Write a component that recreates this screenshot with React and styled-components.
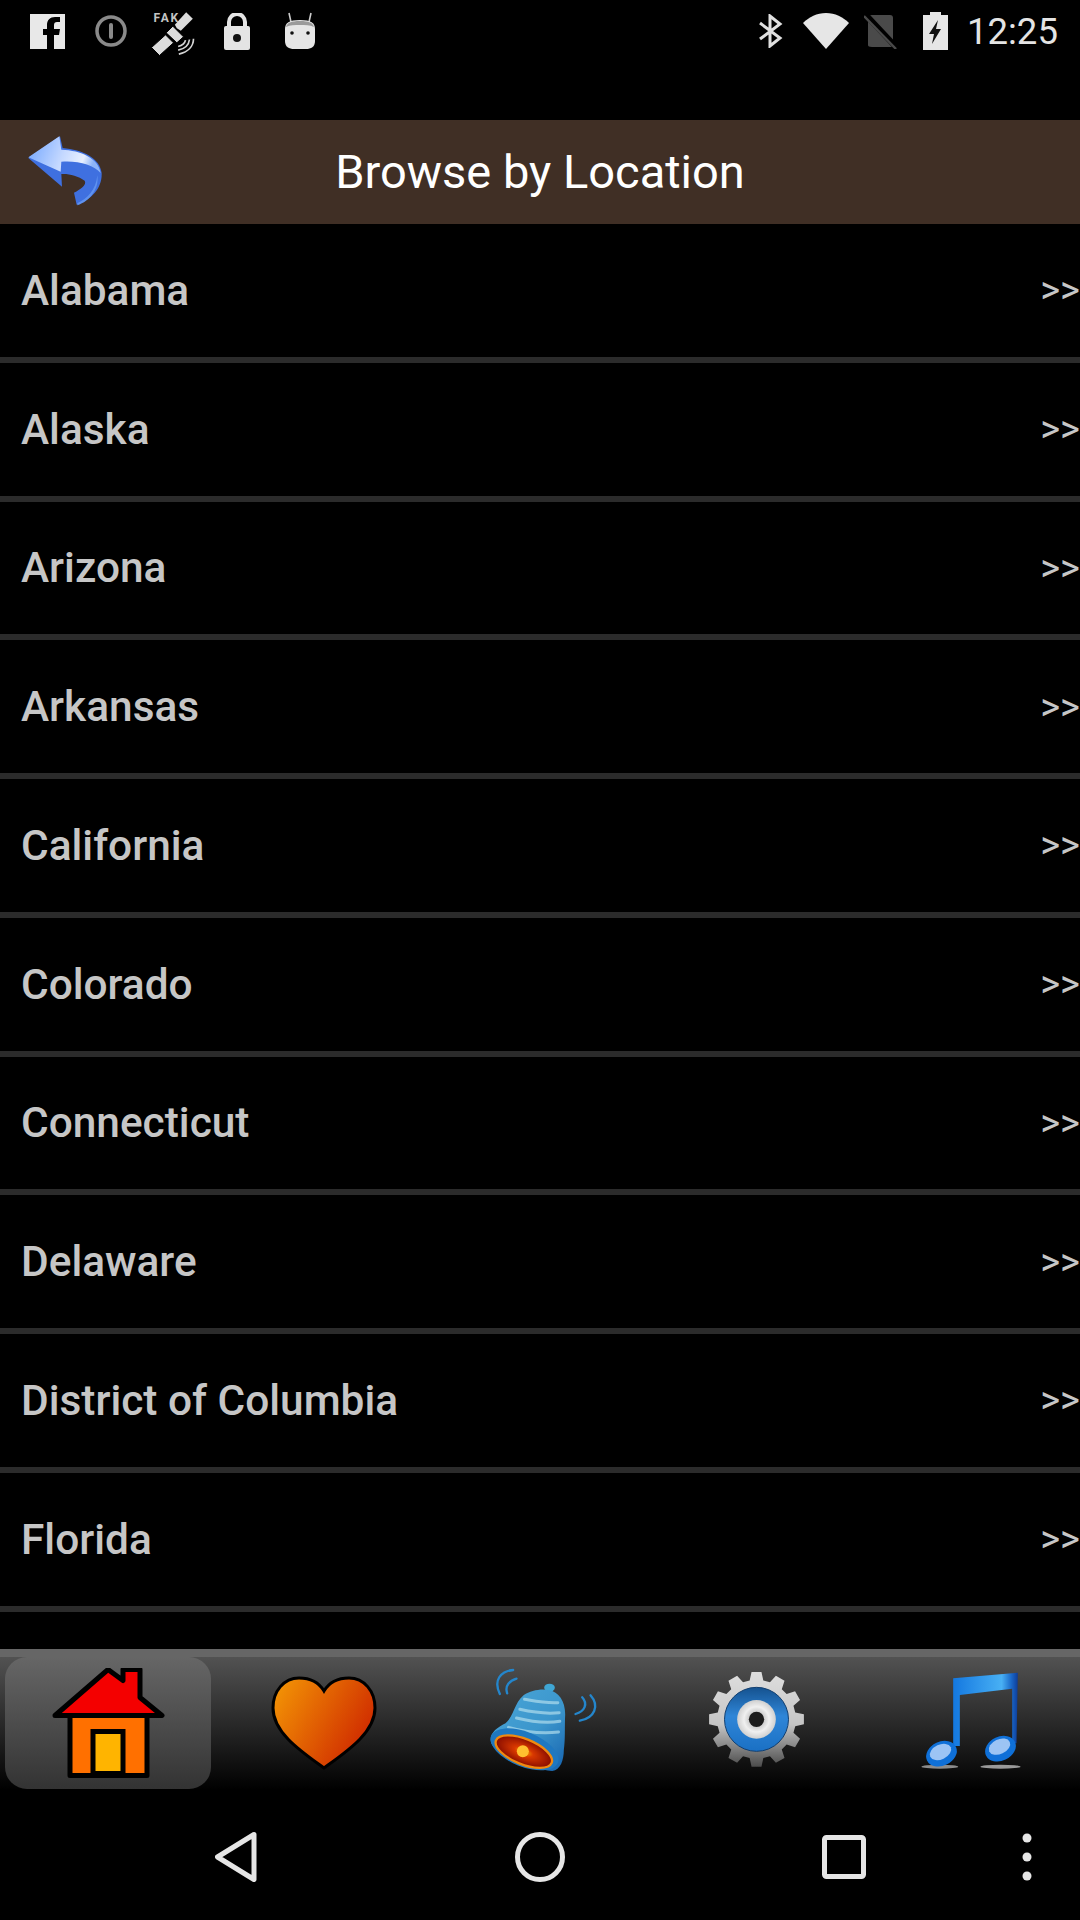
import styled, { createGlobalStyle } from "styled-components";

const GlobalStyle = createGlobalStyle`
  html, body {
    margin: 0;
    padding: 0;
    background: #000;
  }
`;

const Screen = styled.div`
  width: 1080px;
  height: 1920px;
  display: flex;
  flex-direction: column;
  background: #000;
  font-family: Roboto, "Liberation Sans", sans-serif;
  overflow: hidden;
`;

const StatusBar = styled.div`
  height: 120px;
  flex: none;
  display: flex;
  justify-content: space-between;
  align-items: flex-start;
  padding-left: 16px;
  box-sizing: border-box;
`;

const StatusGroup = styled.div`
  display: flex;
  align-items: center;
  height: 62px;
`;

const StatusSlot = styled.div`
  width: ${(p) => p.$width}px;
  display: flex;
  justify-content: center;
  align-items: center;
`;

const Clock = styled.span`
  font-size: 36.5px;
  color: #e4e4e4;
  width: 117px;
  padding-left: 4px;
  box-sizing: border-box;
`;

const Header = styled.div`
  position: relative;
  height: 104px;
  flex: none;
  display: flex;
  align-items: center;
  justify-content: center;
  background: #402f25;
`;

const Title = styled.h1`
  margin: 0 0 2px;
  font-size: 47px;
  font-weight: 400;
  color: #fff;
`;

const BackButton = styled.div`
  position: absolute;
  left: 20px;
  top: 8px;
  width: 90px;
  height: 84px;
  svg {
    filter: blur(0.6px);
  }
`;

const List = styled.div`
  flex: 1;
  min-height: 0;
  overflow: hidden;
`;

const Row = styled.div`
  height: 138.75px;
  box-sizing: border-box;
  display: flex;
  align-items: center;
  justify-content: space-between;
  padding-left: 21px;
  border-bottom: 6px solid #2b2b2b;
`;

const RowLabel = styled.span`
  font-size: 42.4px;
  font-weight: 500;
  color: #c6c6c6;
`;

const RowArrows = styled.span`
  font-size: 38px;
  color: #c6c6c6;
`;

const TabBar = styled.div`
  height: 141px;
  flex: none;
  display: grid;
  grid-template-columns: repeat(5, 216px);
  box-sizing: border-box;
  border-top: 8px solid #666;
  background: linear-gradient(#525252, #000);
`;

const Tab = styled.div`
  display: flex;
  align-items: center;
  justify-content: center;
  height: 132px;
  margin: 0 5px;
  border-radius: 22px;
  background: ${(p) => (p.$active ? "linear-gradient(#666, #333)" : "transparent")};
  svg {
    filter: blur(0.5px);
  }
`;

const NavBar = styled.div`
  height: 130px;
  flex: none;
  box-sizing: border-box;
  padding: 4px 0 0 84px;
  display: grid;
  grid-template-columns: repeat(3, 304px) 62px;
  align-items: center;
  justify-items: center;
`;

const NavItem = styled.div`
  display: flex;
  align-items: center;
  justify-content: center;
`;

const FacebookIcon = () => (
  <svg width="35" height="35" viewBox="0 0 35 35">
    <path d="M0 0h35v35H24V21h5l1-6h-6v-4c0-2 1-3 3-3h3V3h-5c-5 0-8 3-8 8v4h-4v6h4v14H0z" fill="#e8e8e8" />
  </svg>
);

const InfoIcon = () => (
  <svg width="32" height="32" viewBox="0 0 32 32">
    <circle cx="16" cy="16" r="14" fill="none" stroke="#8a8a8a" strokeWidth="3.5" />
    <rect x="14" y="8" width="4" height="16" rx="2" fill="#8a8a8a" />
  </svg>
);

const SatelliteIcon = () => (
  <svg width="60" height="55" viewBox="-4.5 -4.5 180 165">
    <text x="24" y="50" fontFamily="Roboto, sans-serif" fontSize="36" fontWeight="700" letterSpacing="5" fill="#c4c4c4">FAK</text>
    <g fill="#dcdcdc">
      <path d="M122 20l20 20-36 36-12-8-6-10z" />
      <path d="M62 82l20-20 32 32-20 18z" stroke="#000" strokeWidth="3" />
      <path d="M18 126l42-38 24 24-42 38z" stroke="#000" strokeWidth="3" />
    </g>
    <g fill="none" stroke="#d4d4d4" strokeWidth="5">
      <path d="M144 100c0 24-18 40-44 46" />
      <path d="M132 102c-2 16-14 28-34 32" />
      <path d="M120 104c-2 9-10 16-22 19" />
    </g>
  </svg>
);

const LockIcon = () => (
  <svg width="26" height="37" viewBox="0 0 26 37">
    <path d="M5 14V9a8 8 0 0 1 16 0v5" fill="none" stroke="#e4e4e4" strokeWidth="4" />
    <rect x="0" y="13" width="26" height="24" rx="2" fill="#e4e4e4" />
    <circle cx="13" cy="25" r="4" fill="#111" />
  </svg>
);

const AndroidIcon = () => (
  <svg width="32" height="38" viewBox="0 0 32 38">
    <path d="M7 10L5 1M25 10l2-9" stroke="#ccc" strokeWidth="1.6" />
    <path d="M1 17c0-6 4-9 15-9s15 3 15 9v12c0 6-4 8-9 8H10c-5 0-9-2-9-8z" fill="#e6e6e6" />
    <path d="M2 15c1-4 5-6 14-6s13 2 14 6c-4-2-9-2-14-2s-10 0-14 2z" fill="#9a9a9a" />
    <circle cx="8" cy="21" r="1.8" fill="#111" />
    <circle cx="24" cy="21" r="1.8" fill="#111" />
  </svg>
);

const BluetoothIcon = () => (
  <svg width="24" height="34" viewBox="0 0 24 34">
    <path d="M1 9l20 15-10 8V2l10 8L1 25" fill="none" stroke="#e0e0e0" strokeWidth="3" />
  </svg>
);

const WifiIcon = () => (
  <svg width="46" height="36" viewBox="0 0 46 36">
    <path d="M0 10C6 4 14 0 23 0s17 4 23 10L23 36z" fill="#e6e6e6" />
  </svg>
);

const SimIcon = () => (
  <svg width="34" height="36" viewBox="0 0 34 36">
    <path d="M8 2h18c2 0 3 1 3 3v28c0 1-1 1-3 1H8c-3 0-4-1-4-2V5c0-2 1-3 4-3z" fill="#4a4a4a" />
    <path d="M1 1l32 34" stroke="#000" strokeWidth="6" />
    <path d="M0 3l32 33" stroke="#4a4a4a" strokeWidth="2.4" />
  </svg>
);

const BatteryIcon = () => (
  <svg width="25" height="38" viewBox="0 0 25 38">
    <path d="M7 3V0h11v3h7v35H0V3z" fill="#e6e6e6" />
    <path d="M15 8L6 22h5l-2 10 9-15h-5z" fill="#111" />
  </svg>
);

const ReplyIcon = () => (
  <svg width="90" height="84" viewBox="0 0 270 252">
    <defs>
      <linearGradient id="replyFace" x1="0" y1="0" x2="1" y2="0.2">
        <stop offset="0" stopColor="#6fa4ff" />
        <stop offset="0.55" stopColor="#c4d8ff" />
        <stop offset="0.85" stopColor="#e8f0ff" />
        <stop offset="1" stopColor="#8db4f8" />
      </linearGradient>
    </defs>
    <path d="M25 90L120 25l8 35c60 5 112 30 117 75 2 45-30 80-75 95l-8-36c25-12 38-25 32-36-20-15-50-22-70-20l2 38z" fill="#3f70e0" />
    <path d="M25 88L118 25l6 40c60 2 112 26 118 70-20-25-70-38-118-34l-2 30z" fill="url(#replyFace)" />
    <path d="M172 226c30-14 56-40 60-84 6 40-22 78-60 90z" fill="#5f92ef" />
  </svg>
);

const HomeIcon = () => (
  <svg width="113" height="111" viewBox="0 1.5 113 111">
    <rect x="18" y="48" width="77" height="61" fill="#ff7000" stroke="#000" strokeWidth="5" strokeLinejoin="round" />
    <rect x="41" y="65" width="30" height="42" fill="#ffb400" stroke="#000" strokeWidth="5" />
    <path d="M3 49L56 3l15 11V3h17v28l22 18z" fill="#f40000" stroke="#000" strokeWidth="5" strokeLinejoin="round" />
  </svg>
);

const HeartIcon = () => (
  <svg width="106" height="94" viewBox="0 0 106 94">
    <defs>
      <linearGradient id="heartFill" x1="0" y1="0" x2="1" y2="0.5">
        <stop offset="0" stopColor="#f59a05" />
        <stop offset="1" stopColor="#d02c00" />
      </linearGradient>
    </defs>
    <path d="M53 15C47 5 38 2 28 2 13 2 2 15 2 32c0 25 29 44 51 60 22-16 51-35 51-60C104 15 93 2 78 2 68 2 59 5 53 15z" fill="url(#heartFill)" stroke="#000" strokeWidth="3" />
  </svg>
);

const BellIcon = () => (
  <svg width="125" height="120" viewBox="-7.500 9 375 360">
    <defs>
      <linearGradient id="bellBody" x1="0" y1="0" x2="0.8" y2="1">
        <stop offset="0" stopColor="#4aa6d8" />
        <stop offset="0.6" stopColor="#3c96cc" />
        <stop offset="1" stopColor="#1c6cb4" />
      </linearGradient>
      <radialGradient id="bellMouth" cx="0.5" cy="0.5" r="0.55">
        <stop offset="0" stopColor="#ffaa00" />
        <stop offset="0.3" stopColor="#d83800" />
        <stop offset="1" stopColor="#7c0600" />
      </radialGradient>
    </defs>
    <ellipse cx="207" cy="83" rx="16" ry="12" fill="#3fa6d4" />
    <path d="M205 90C235 95 255 125 254 165 252 205 255 235 250 270 250 300 240 330 215 333 170 330 70 300 35 255 20 225 45 205 75 190 100 170 100 130 130 105 150 92 180 85 205 90z" fill="url(#bellBody)" />
    <g fill="none" stroke="#b8e2f0" strokeWidth="9" strokeLinecap="round" opacity="0.65">
      <path d="M132 118c30 5 62 12 100 10" />
      <path d="M118 148c35 8 80 14 118 10" />
      <path d="M108 174c40 10 90 16 130 10" />
      <path d="M84 202c50 14 100 20 150 14" />
    </g>
    <ellipse cx="132" cy="268" rx="108" ry="52" transform="rotate(22 132 268)" fill="#1f78c0" />
    <ellipse cx="130" cy="275" rx="90" ry="38" transform="rotate(22 130 275)" fill="url(#bellMouth)" stroke="#f08a10" strokeWidth="7" />
    <circle cx="127" cy="274" r="18" fill="#ffc030" />
    <g fill="none" stroke="#2486cc" strokeWidth="7" strokeLinecap="round">
      <path d="M98 30C60 34 38 60 58 102" />
      <path d="M108 56C88 62 72 76 80 100" />
      <path d="M305 112c18 20 8 42-20 50" />
      <path d="M330 106c28 32 12 68-32 76" />
    </g>
  </svg>
);

const CX = 168;
const CY = 178;

// outline of the cog, 12 teeth round the centre
const gearOutline = Array.from({ length: 12 }, (_, i) => {
  const a = (i * 30 * Math.PI) / 180 - Math.PI / 2;
  return [
    [118, -10],
    [143, -6],
    [143, 6],
    [118, 10],
  ]
    .map(([r, d]) => {
      const t = a + (d * Math.PI) / 180;
      return `${(CX + r * Math.cos(t)).toFixed(1)} ${(CY + r * Math.sin(t)).toFixed(1)}`;
    })
    .join(" L");
}).join(" L");

const GearIcon = () => (
  <svg width="125" height="120" viewBox="-19.500 9 375 360">
    <defs>
      <linearGradient id="gearMetal" x1="0" y1="0" x2="0" y2="1">
        <stop offset="0" stopColor="#dedede" />
        <stop offset="0.55" stopColor="#c6c6c6" />
        <stop offset="1" stopColor="#4c4c4c" />
      </linearGradient>
      <linearGradient id="gearRing" x1="0" y1="0" x2="0" y2="1">
        <stop offset="0" stopColor="#15528f" />
        <stop offset="0.45" stopColor="#2f86d8" />
        <stop offset="1" stopColor="#1a70c4" />
      </linearGradient>
      <radialGradient id="gearDisc" cx="0.5" cy="0.5" r="0.5">
        <stop offset="0" stopColor="#999" />
        <stop offset="0.65" stopColor="#f0f0f0" />
        <stop offset="1" stopColor="#cfcfcf" />
      </radialGradient>
    </defs>
    <path d={`M${gearOutline}z`} fill="url(#gearMetal)" />
    <circle cx={CX} cy={CY} r="96" fill="url(#gearRing)" stroke="#123f70" strokeWidth="3" />
    <circle cx={CX} cy={CY} r="58" fill="url(#gearDisc)" />
    <circle cx={CX} cy={CY} r="23" fill="#1c1c1c" />
  </svg>
);

const NoteIcon = () => (
  <svg width="125" height="120" viewBox="-1.500 9 375 360">
    <defs>
      <linearGradient id="noteBeam" x1="0" y1="0" x2="1" y2="0">
        <stop offset="0" stopColor="#1478e0" />
        <stop offset="0.75" stopColor="#48b0f4" />
        <stop offset="0.9" stopColor="#1a68c8" />
        <stop offset="1" stopColor="#0e3c98" />
      </linearGradient>
    </defs>
    <ellipse cx="88" cy="320" rx="55" ry="6" fill="#8c8c8c" />
    <ellipse cx="270" cy="320" rx="60" ry="6" fill="#9a9a9a" />
    <path d="M128 258V55L322 38 318 250 305 250V86L148 105V258z" fill="url(#noteBeam)" />
    <ellipse cx="93" cy="281" rx="48" ry="36" transform="rotate(-25 93 281)" fill="#0f70d8" />
    <ellipse cx="270" cy="266" rx="48" ry="36" transform="rotate(-25 270 266)" fill="#0f70d8" />
    <ellipse cx="90" cy="276" rx="34" ry="22" transform="rotate(-25 90 276)" fill="#9cc4f4" />
    <ellipse cx="267" cy="260" rx="34" ry="22" transform="rotate(-25 267 260)" fill="#9cc4f4" />
  </svg>
);

const NavBack = () => (
  <svg width="42" height="50" viewBox="0 0 42 50">
    <path d="M39 2.500L2.500 25 39 47.500z" fill="none" stroke="#e6e6e6" strokeWidth="5" strokeLinejoin="round" />
  </svg>
);

const NavHome = () => (
  <svg width="50" height="50" viewBox="0 0 50 50">
    <circle cx="25" cy="25" r="22.500" fill="none" stroke="#e6e6e6" strokeWidth="5" />
  </svg>
);

const NavRecent = () => (
  <svg width="44" height="44" viewBox="0 0 44 44">
    <rect x="2.500" y="2.500" width="39" height="39" rx="2" fill="none" stroke="#e6e6e6" strokeWidth="5" />
  </svg>
);

const NavMenu = () => (
  <svg width="10" height="48" viewBox="0 0 10 48">
    <circle cx="5" cy="5" r="4.500" fill="#e6e6e6" />
    <circle cx="5" cy="24" r="4.500" fill="#e6e6e6" />
    <circle cx="5" cy="43" r="4.500" fill="#e6e6e6" />
  </svg>
);

const leftStatus = [FacebookIcon, InfoIcon, SatelliteIcon, LockIcon, AndroidIcon];
const rightStatus = [BluetoothIcon, WifiIcon, SimIcon, BatteryIcon];
const states = [
  "Alabama",
  "Alaska",
  "Arizona",
  "Arkansas",
  "California",
  "Colorado",
  "Connecticut",
  "Delaware",
  "District of Columbia",
  "Florida",
];
const tabs = [HomeIcon, HeartIcon, BellIcon, GearIcon, NoteIcon];
const navItems = [NavBack, NavHome, NavRecent, NavMenu];

export default function App() {
  return (
    <Screen>
      <GlobalStyle />
      <StatusBar>
        <StatusGroup>
          {leftStatus.map((Icon, i) => (
            <StatusSlot key={i} $width={63}>
              <Icon />
            </StatusSlot>
          ))}
        </StatusGroup>
        <StatusGroup>
          {rightStatus.map((Icon, i) => (
            <StatusSlot key={i} $width={55}>
              <Icon />
            </StatusSlot>
          ))}
          <Clock>12:25</Clock>
        </StatusGroup>
      </StatusBar>
      <Header>
        <BackButton>
          <ReplyIcon />
        </BackButton>
        <Title>Browse by Location</Title>
      </Header>
      <List>
        {states.map((state) => (
          <Row key={state}>
            <RowLabel>{state}</RowLabel>
            <RowArrows>&gt;&gt;</RowArrows>
          </Row>
        ))}
      </List>
      <TabBar>
        {tabs.map((Icon, i) => (
          <Tab key={i} $active={i === 0}>
            <Icon />
          </Tab>
        ))}
      </TabBar>
      <NavBar>
        {navItems.map((Icon, i) => (
          <NavItem key={i}>
            <Icon />
          </NavItem>
        ))}
      </NavBar>
    </Screen>
  );
}
